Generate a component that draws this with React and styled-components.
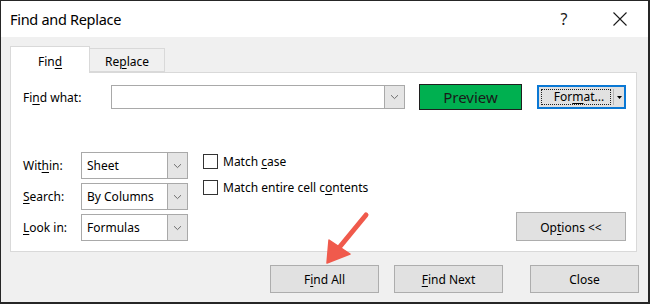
import React from "react";
import styled, { createGlobalStyle } from "styled-components";

const Global = createGlobalStyle`
  html, body { margin: 0; padding: 0; background: #ffffff; }
  * { box-sizing: border-box; }
  body { font-family: "Noto Sans", "Open Sans", sans-serif; color: #000; }
`;

const Window = styled.div`
  position: relative;
  width: 650px;
  height: 304px;
  border: 1px solid #262626;
  border-right-width: 2px;
  border-bottom-width: 2px;
  background: #f0f0f0;
  display: flex;
  flex-direction: column;
  overflow: hidden;
`;

const TitleBar = styled.div`
  height: 36px;
  flex: none;
  background: #ffffff;
  display: flex;
  align-items: center;
  padding-left: 9px;
  font-size: 14.5px;
`;

const Title = styled.div`
  flex: 1;
  letter-spacing: -0.3px;
`;

const TitleIcon = styled.div`
  width: ${(p) => p.$w}px;
  margin-right: ${(p) => p.$mr}px;
  display: flex;
  justify-content: center;
  align-items: center;
  font-size: 16px;
  color: #1a1a1a;
`;

const Body = styled.div`
  flex: 1;
  padding: 9px 9px 0 9px;
  display: flex;
  flex-direction: column;
`;

const Tabs = styled.div`
  display: flex;
  align-items: flex-end;
  height: 26px;
  position: relative;
  z-index: 1;
`;

const Tab = styled.div`
  width: ${(p) => p.$w}px;
  height: ${(p) => (p.$active ? 27 : 24)}px;
  margin-bottom: ${(p) => (p.$active ? -1 : 0)}px;
  background: ${(p) => (p.$active ? "#ffffff" : "#f0f0f0")};
  border: 1px solid #d9d9d9;
  border-bottom: ${(p) => (p.$active ? "none" : "1px solid #d9d9d9")};
  border-left: ${(p) => (p.$noLeft ? "none" : "1px solid #d9d9d9")};
  display: flex;
  justify-content: center;
  align-items: center;
  padding-top: 2px;
  font-size: 12px;
`;

const Panel = styled.div`
  width: 627px;
  height: 180px;
  background: #ffffff;
  border: 1px solid #d9d9d9;
  padding: 11px 10px 10px 12px;
  display: flex;
  flex-direction: column;
  font-size: 12px;
`;

const TopRow = styled.div`
  display: flex;
  align-items: center;
  height: 26px;
`;

const Label = styled.div`
  width: ${(p) => p.$w}px;
  flex: none;
`;

const U = styled.span`
  text-decoration: underline;
  text-underline-offset: 2px;
  text-decoration-thickness: 1px;
`;

const Combo = styled.div`
  width: ${(p) => p.$w}px;
  height: ${(p) => p.$h}px;
  flex: none;
  border: 1px solid #a9a9a9;
  background: #ffffff;
  display: flex;
  align-items: stretch;
`;

const ComboValue = styled.div`
  flex: 1;
  display: flex;
  align-items: center;
  padding-left: 5px;
`;

const DropBtn = styled.div`
  width: 20px;
  flex: none;
  border-left: 1px solid #a9a9a9;
  background: #e5e5e5;
  display: flex;
  justify-content: center;
  align-items: center;
`;

const Chevron = () => (
  <svg width="9" height="6" viewBox="0 0 9 6">
    <path d="M1 1.2 L4.5 4.6 L8 1.2" fill="none" stroke="#6d6d6d" strokeWidth="1" />
  </svg>
);

const PreviewBox = styled.div`
  width: 103px;
  height: 26px;
  flex: none;
  margin-left: 14px;
  background: #00b050;
  border: 1px solid #1f1f1f;
  display: flex;
  justify-content: center;
  align-items: center;
  font-size: 15px;
  color: #1a1a1a;
  padding-bottom: 1px;
`;

const SplitButton = styled.div`
  width: 89px;
  height: 24px;
  flex: none;
  margin-left: 15px;
  border: 2px solid #0a78d4;
  background: #e1e1e1;
  display: flex;
  align-items: stretch;
`;

const SplitMain = styled.div`
  flex: 1;
  margin: 2px;
  border: 1px dotted #222;
  display: flex;
  justify-content: center;
  align-items: center;
  padding-left: 6px;
  padding-bottom: 1px;
`;

const SplitArrow = styled.div`
  width: 11px;
  flex: none;
  border-left: 1px solid #b5b5b5;
  margin: 2px 0;
  display: flex;
  justify-content: center;
  align-items: center;
`;

const Lower = styled.div`
  margin-top: auto;
  display: flex;
  align-items: flex-start;
`;

const SelectCol = styled.div`
  display: flex;
  flex-direction: column;
  gap: 4px;
`;

const FieldRow = styled.div`
  display: flex;
  align-items: center;
`;

const CheckCol = styled.div`
  margin-left: 15px;
  margin-top: 2px;
  display: flex;
  flex-direction: column;
  gap: 11px;
  flex: 1;
`;

const CheckRow = styled.div`
  display: flex;
  align-items: center;
  height: 15px;
  gap: 5px;
`;

const Box = styled.div`
  width: 15px;
  height: 15px;
  border: 1px solid #333333;
  background: #ffffff;
  flex: none;
`;

const Button = styled.div`
  width: ${(p) => p.$w}px;
  height: ${(p) => p.$h}px;
  margin-left: ${(p) => p.$ml || 0}px;
  flex: none;
  background: #e1e1e1;
  border: 1px solid #adadad;
  display: flex;
  justify-content: center;
  align-items: center;
  font-size: 12px;
  padding-top: 1px;
`;

const OptionsButton = styled(Button)`
  align-self: flex-end;
`;

const ButtonRow = styled.div`
  margin-top: 13px;
  display: flex;
  justify-content: flex-end;
`;

const ArrowOverlay = styled.svg`
  position: absolute;
  left: 0;
  top: 0;
  pointer-events: none;
`;

const selects = [
  { label: <>Wit<U>h</U>in:</>, value: "Sheet" },
  { label: <><U>S</U>earch:</>, value: "By Columns" },
  { label: <><U>L</U>ook in:</>, value: "Formulas" },
];

export default function App() {
  return (
    <>
      <Global />
      <Window>
        <TitleBar>
          <Title>Find and Replace</Title>
          <TitleIcon $w={14} $mr={41}>?</TitleIcon>
          <TitleIcon $w={16} $mr={20}>
            <svg width="14" height="14" viewBox="0 0 14 14">
              <path d="M0.5 0.5 L13.5 13.5 M13.5 0.5 L0.5 13.5" stroke="#1a1a1a" strokeWidth="1.1" />
            </svg>
          </TitleIcon>
        </TitleBar>
        <Body>
          <Tabs>
            <Tab $w={80} $active>
              Fin<U>d</U>
            </Tab>
            <Tab $w={75} $noLeft>
              Re<U>p</U>lace
            </Tab>
          </Tabs>
          <Panel>
            <TopRow>
              <Label $w={88}>
                Fi<U>n</U>d what:
              </Label>
              <Combo $w={294} $h={24}>
                <ComboValue />
                <DropBtn>
                  <Chevron />
                </DropBtn>
              </Combo>
              <PreviewBox>Preview</PreviewBox>
              <SplitButton>
                <SplitMain>
                  For<U>m</U>at...
                </SplitMain>
                <SplitArrow>
                  <svg width="5" height="3" viewBox="0 0 5 3">
                    <path d="M0 0 L5 0 L2.5 3 Z" fill="#000" />
                  </svg>
                </SplitArrow>
              </SplitButton>
            </TopRow>
            <Lower>
              <SelectCol>
                {selects.map((s, i) => (
                  <FieldRow key={i}>
                    <Label $w={58}>{s.label}</Label>
                    <Combo $w={107} $h={27}>
                      <ComboValue>{s.value}</ComboValue>
                      <DropBtn>
                        <Chevron />
                      </DropBtn>
                    </Combo>
                  </FieldRow>
                ))}
              </SelectCol>
              <CheckCol>
                <CheckRow>
                  <Box />
                  <span>
                    Match <U>c</U>ase
                  </span>
                </CheckRow>
                <CheckRow>
                  <Box />
                  <span>
                    Match entire cell c<U>o</U>ntents
                  </span>
                </CheckRow>
              </CheckCol>
              <OptionsButton $w={110} $h={29}>
                Op<U>t</U>ions &lt;&lt;
              </OptionsButton>
            </Lower>
          </Panel>
          <ButtonRow>
            <Button $w={109} $h={28}>
              F<U>i</U>nd All
            </Button>
            <Button $w={109} $h={28} $ml={15}>
              <U>F</U>ind Next
            </Button>
            <Button $w={109} $h={28} $ml={27}>
              Close
            </Button>
          </ButtonRow>
        </Body>
        <ArrowOverlay width="650" height="304" viewBox="0 0 650 304">
          <path d="M365 214 L337 248" stroke="#f05a4c" strokeWidth="5" strokeLinecap="round" fill="none" />
          <path d="M326 262 L328 239 L349 253 Z" fill="#f05a4c" stroke="#f05a4c" strokeWidth="1.5" strokeLinejoin="round" />
        </ArrowOverlay>
      </Window>
    </>
  );
}
